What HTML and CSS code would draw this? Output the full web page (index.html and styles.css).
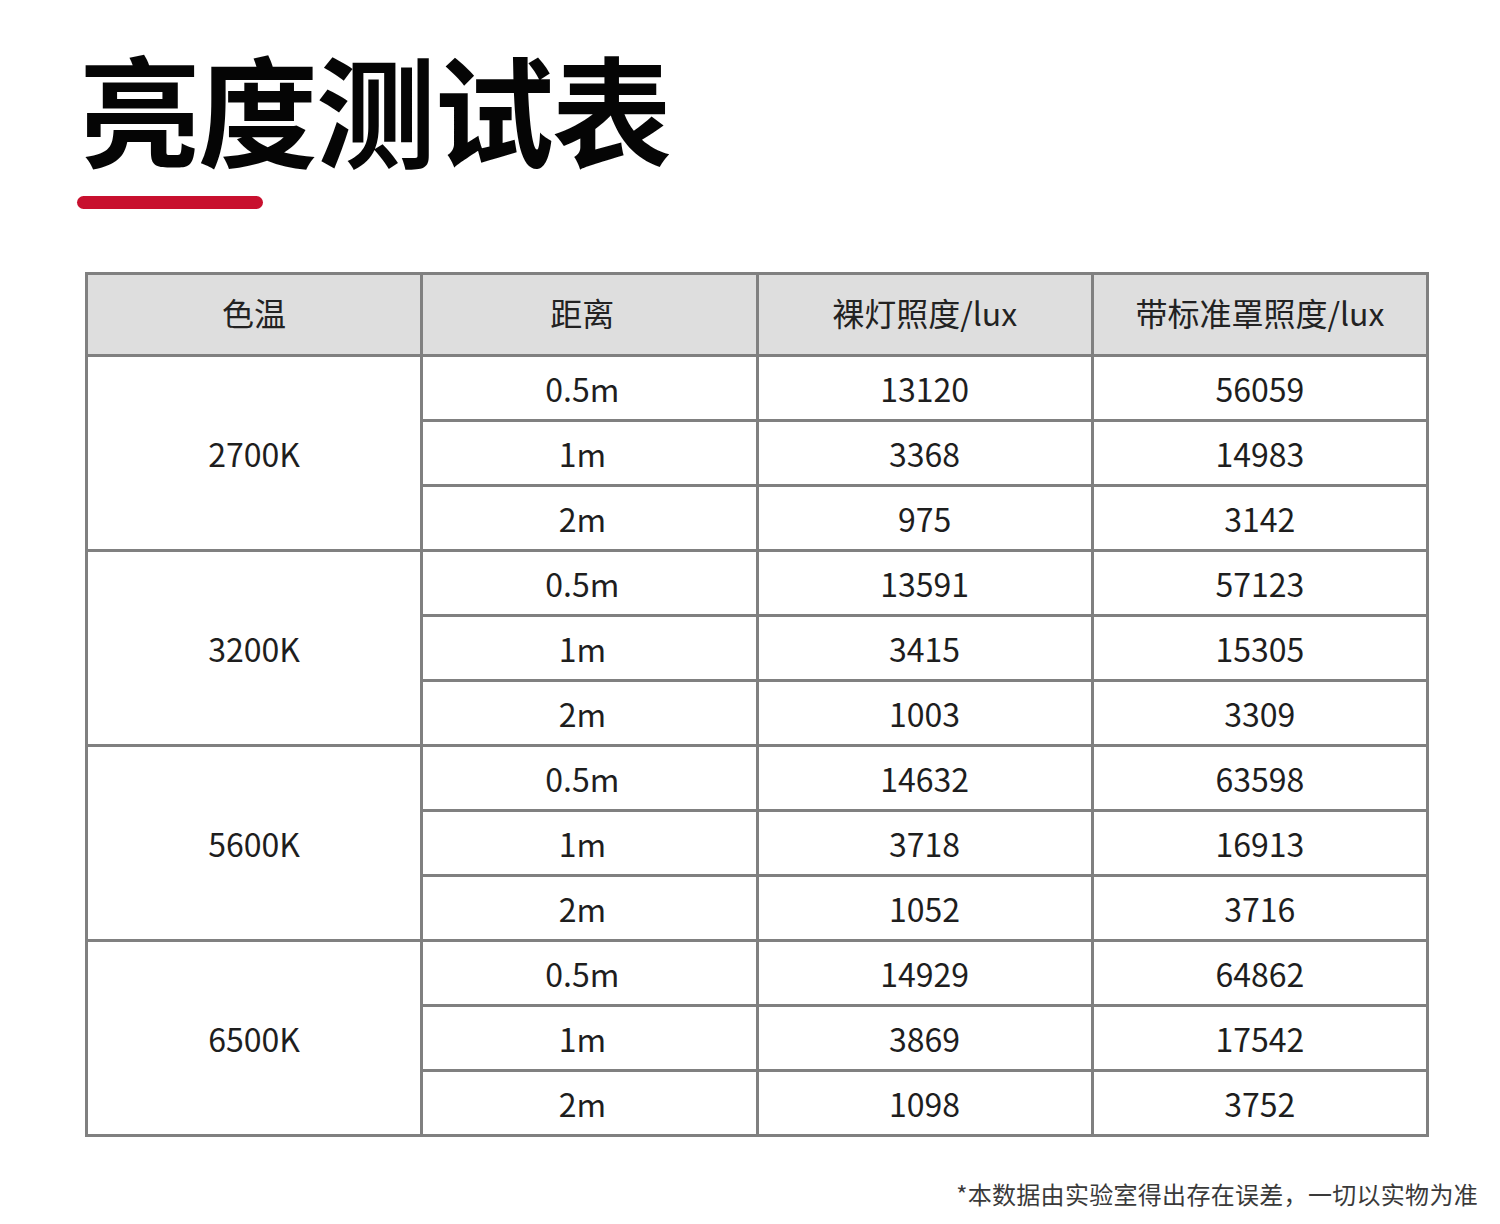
FILE: index.html
```html
<!DOCTYPE html>
<html lang="zh-CN">
<head>
<meta charset="utf-8">
<title>亮度测试表</title>
<link rel="stylesheet" href="styles.css">
</head>
<body>
<div class="page">
  <h1 class="title">亮度测试表</h1>
  <div class="accent"></div>
  <table class="data">
    <thead>
      <tr><th>色温</th><th class="dist">距离</th><th>裸灯照度/lux</th><th>带标准罩照度/lux</th></tr>
    </thead>
    <tbody>
      <tr><td rowspan="3">2700K</td><td class="dist">0.5m</td><td>13120</td><td>56059</td></tr>
      <tr><td class="dist">1m</td><td>3368</td><td>14983</td></tr>
      <tr><td class="dist">2m</td><td>975</td><td>3142</td></tr>
      <tr><td rowspan="3">3200K</td><td class="dist">0.5m</td><td>13591</td><td>57123</td></tr>
      <tr><td class="dist">1m</td><td>3415</td><td>15305</td></tr>
      <tr><td class="dist">2m</td><td>1003</td><td>3309</td></tr>
      <tr><td rowspan="3">5600K</td><td class="dist">0.5m</td><td>14632</td><td>63598</td></tr>
      <tr><td class="dist">1m</td><td>3718</td><td>16913</td></tr>
      <tr><td class="dist">2m</td><td>1052</td><td>3716</td></tr>
      <tr><td rowspan="3">6500K</td><td class="dist">0.5m</td><td>14929</td><td>64862</td></tr>
      <tr><td class="dist">1m</td><td>3869</td><td>17542</td></tr>
      <tr><td class="dist">2m</td><td>1098</td><td>3752</td></tr>
    </tbody>
  </table>
  <p class="note">*本数据由实验室得出存在误差，一切以实物为准</p>
</div>
</body>
</html>
```
FILE: styles.css
```css
html, body {
  margin: 0;
  padding: 0;
  background: #ffffff;
}
.page {
  width: 1500px;
  height: 1224px;
  overflow: hidden;
  font-family: "Noto Sans CJK SC", "Noto Sans", sans-serif;
  color: #1e1e1e;
}
.title {
  margin: 47px 0 0 80px;
  font-size: 120px;
  line-height: 120px;
  height: 120px;
  font-weight: 700;
  color: #050505;
  letter-spacing: -2px;
}
.accent {
  margin: 29px 0 0 77px;
  width: 186px;
  height: 13px;
  border-radius: 7px;
  background: #c8102e;
}
.data {
  margin: 63px 0 0 85px;
  width: 1344px;
  border-collapse: collapse;
  table-layout: fixed;
  border: 3px solid #808080;
}
.data th, .data td {
  border: 3px solid #808080;
  text-align: center;
  vertical-align: middle;
  padding: 0;
  font-size: 32px;
  font-weight: 400;
  line-height: 40px;
}
.data th {
  background: #dedede;
  height: 73px;
  padding-bottom: 6px;
  color: #222;
}
.data td {
  height: 62px;
  color: #1e1e1e;
}
.data .dist {
  padding-right: 14px;
}
.note {
  margin: 42px 22px 0 0;
  text-align: right;
  font-size: 24px;
  line-height: 30px;
  letter-spacing: 0.3px;
  color: #3a3a3a;
}
```
